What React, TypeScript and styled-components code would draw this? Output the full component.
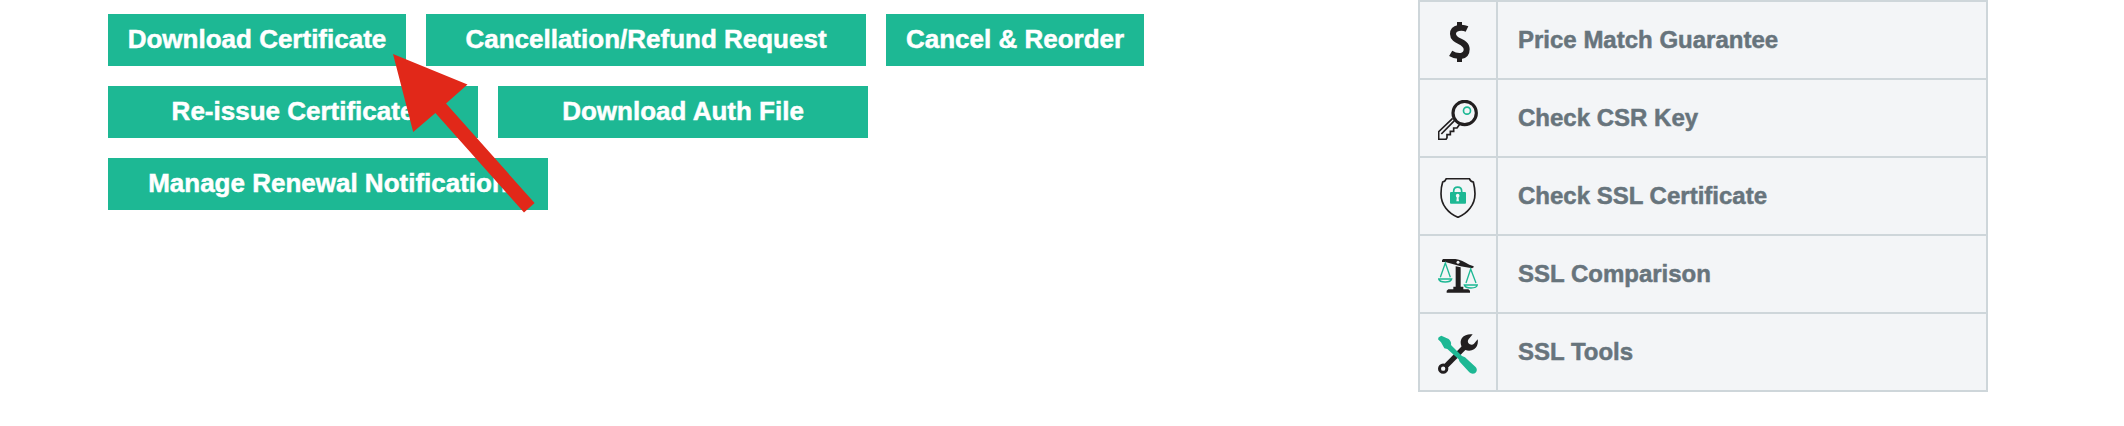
import React from "react";
import styled, { createGlobalStyle } from "styled-components";

const GREEN = "#1db894";
const INK = "#221f20";
const LINE = "#ced6da";

const GlobalStyle = createGlobalStyle`
  body {
    margin: 0;
    background: #fff;
    font-family: "Liberation Sans", Arial, sans-serif;
  }
`;

const Page = styled.main`
  position: relative;
  display: flex;
  justify-content: space-between;
  align-items: flex-start;
  box-sizing: border-box;
  width: 2124px;
  height: 426px;
  padding: 0 136px 0 108px;
  overflow: hidden;
`;

const Actions = styled.div`
  display: flex;
  flex-direction: column;
  gap: 20px;
  padding-top: 14px;
`;

const ActionRow = styled.div`
  display: flex;
  gap: 20px;
`;

const ActionButton = styled.button<{ $width: number }>`
  width: ${(p) => p.$width}px;
  height: 52px;
  padding: 0 0 2px;
  border: 0;
  background: ${GREEN};
  color: #fff;
  font: bold 26px/50px "Liberation Sans", Arial, sans-serif;
  -webkit-text-stroke: 0.5px currentColor;
  white-space: nowrap;
`;

const Links = styled.ul`
  box-sizing: border-box;
  width: 570px;
  margin: 0;
  padding: 0;
  list-style: none;
  border: 2px solid ${LINE};
  border-bottom: 0;
  background: #f3f5f7;
`;

const LinkRow = styled.li`
  display: flex;
  height: 76px;
  border-bottom: 2px solid ${LINE};
`;

const IconCell = styled.span`
  display: flex;
  align-items: center;
  justify-content: center;
  box-sizing: border-box;
  width: 78px;
  padding-top: 4px;
  border-right: 2px solid ${LINE};
`;

const Label = styled.span`
  padding-left: 20px;
  color: #67747c;
  font-size: 24px;
  font-weight: bold;
  line-height: 76px;
  -webkit-text-stroke: 0.5px currentColor;
`;

const Icon = styled.svg.attrs({ viewBox: "0 0 120 120", fill: "none" })`
  width: 40px;
  height: 40px;
`;

const Arrow = styled.svg`
  position: absolute;
  left: 380px;
  top: 40px;
  width: 170px;
  height: 180px;
  pointer-events: none;
`;

const DollarIcon = () => (
  <Icon stroke={INK}>
    <path d="M64.500 0V18M64.500 102V120" strokeWidth="15" />
    <path
      d="M87 21C75 15 45 14 45 36C45 61 86 55 86 82C86 108 56 105 38 94"
      strokeWidth="18"
    />
  </Icon>
);

const KeyIcon = () => (
  <Icon stroke={INK}>
    <circle cx="80" cy="39" r="35" strokeWidth="9.500" />
    <circle cx="87" cy="32" r="10.500" stroke={GREEN} strokeWidth="5" />
    <path d="M44 55L2 95V118H24L27 113V104H37V94H47V84H57L64 74" strokeWidth="5" />
    <path d="M50 61L10 102" strokeWidth="5" />
  </Icon>
);

const ShieldIcon = () => (
  <Icon>
    <path
      d="M25 2H94C96 7 99 11 106 12C109 24 111 35 111 47C111 81 88 106 60 118C31 106 9 81 9 47C9 35 10 24 14 12C20 11 23 7 25 2Z"
      stroke={INK}
      strokeWidth="5"
    />
    <path d="M47 45V40C47 23 71 23 71 40V45" stroke={GREEN} strokeWidth="5" />
    <rect x="36" y="42" width="48" height="35" rx="3" fill={GREEN} />
    <circle cx="59" cy="53" r="5.5" fill="#f3f5f7" />
    <path d="M57 55H61L63 70H55Z" fill="#f3f5f7" />
  </Icon>
);

const ScalesIcon = () => (
  <Icon>
    <path
      d="M12 13L15 9H52C67 10 79 18 94 26L107 31V34L102 37L68 31L22 18L12 18Z"
      fill={INK}
    />
    <circle cx="60" cy="19" r="4.5" fill="#f3f5f7" />
    <path d="M53 31L68 34V92H76V100H91L96 104V110H26V104L31 100H46V92H53Z" fill={INK} />
    <path
      d="M7 64L22 21L37 64M2 69H41C38 81 5 81 2 69ZM84 81L98 39L114 81M79 87H118C116 99 82 99 79 87Z"
      stroke={GREEN}
      strokeWidth="4"
    />
  </Icon>
);

const ToolsIcon = () => (
  <Icon>
    <path d="M18 102L83 36" stroke={INK} strokeWidth="16" />
    <path
      d="M104 1C93 -1 79 2 72 12C65 22 68 35 74 42C81 51 98 53 108 46C118 40 121 27 119 16L108 29C103 34 95 32 91 27C88 22 90 17 95 12Z"
      fill={INK}
    />
    <circle cx="15.5" cy="104" r="11" stroke={INK} strokeWidth="9" fill="#f3f5f7" />
    <path
      d="M2 10L10 5L32 15C39 21 40 27 39 33L72 66L81 70L112 98C119 105 117 113 111 118C105 121 98 119 94 115L65 83L62 76L28 45L19 43L9 25L0 16Z"
      fill={GREEN}
    />
  </Icon>
);

const actionRows = [
  [
    { label: "Download Certificate", width: 298 },
    { label: "Cancellation/Refund Request", width: 440 },
    { label: "Cancel & Reorder", width: 258 },
  ],
  [
    { label: "Re-issue Certificate", width: 370 },
    { label: "Download Auth File", width: 370 },
  ],
  [{ label: "Manage Renewal Notification", width: 440 }],
];

const links = [
  { label: "Price Match Guarantee", Glyph: DollarIcon },
  { label: "Check CSR Key", Glyph: KeyIcon },
  { label: "Check SSL Certificate", Glyph: ShieldIcon },
  { label: "SSL Comparison", Glyph: ScalesIcon },
  { label: "SSL Tools", Glyph: ToolsIcon },
];

export default function App() {
  return (
    <>
      <GlobalStyle />
      <Page>
        <Actions>
          {actionRows.map((row) => (
            <ActionRow key={row[0].label}>
              {row.map(({ label, width }) => (
                <ActionButton key={label} $width={width}>
                  {label}
                </ActionButton>
              ))}
            </ActionRow>
          ))}
        </Actions>
        <Links>
          {links.map(({ label, Glyph }) => (
            <LinkRow key={label}>
              <IconCell>
                <Glyph />
              </IconCell>
              <Label>{label}</Label>
            </LinkRow>
          ))}
        </Links>
        <Arrow viewBox="380 40 170 180">
          <path
            d="M393 54L467.5 84.5L446 103.5L534.6 203L524 212.5L435.4 113L413.2 132Z"
            fill="#e12819"
          />
        </Arrow>
      </Page>
    </>
  );
}
